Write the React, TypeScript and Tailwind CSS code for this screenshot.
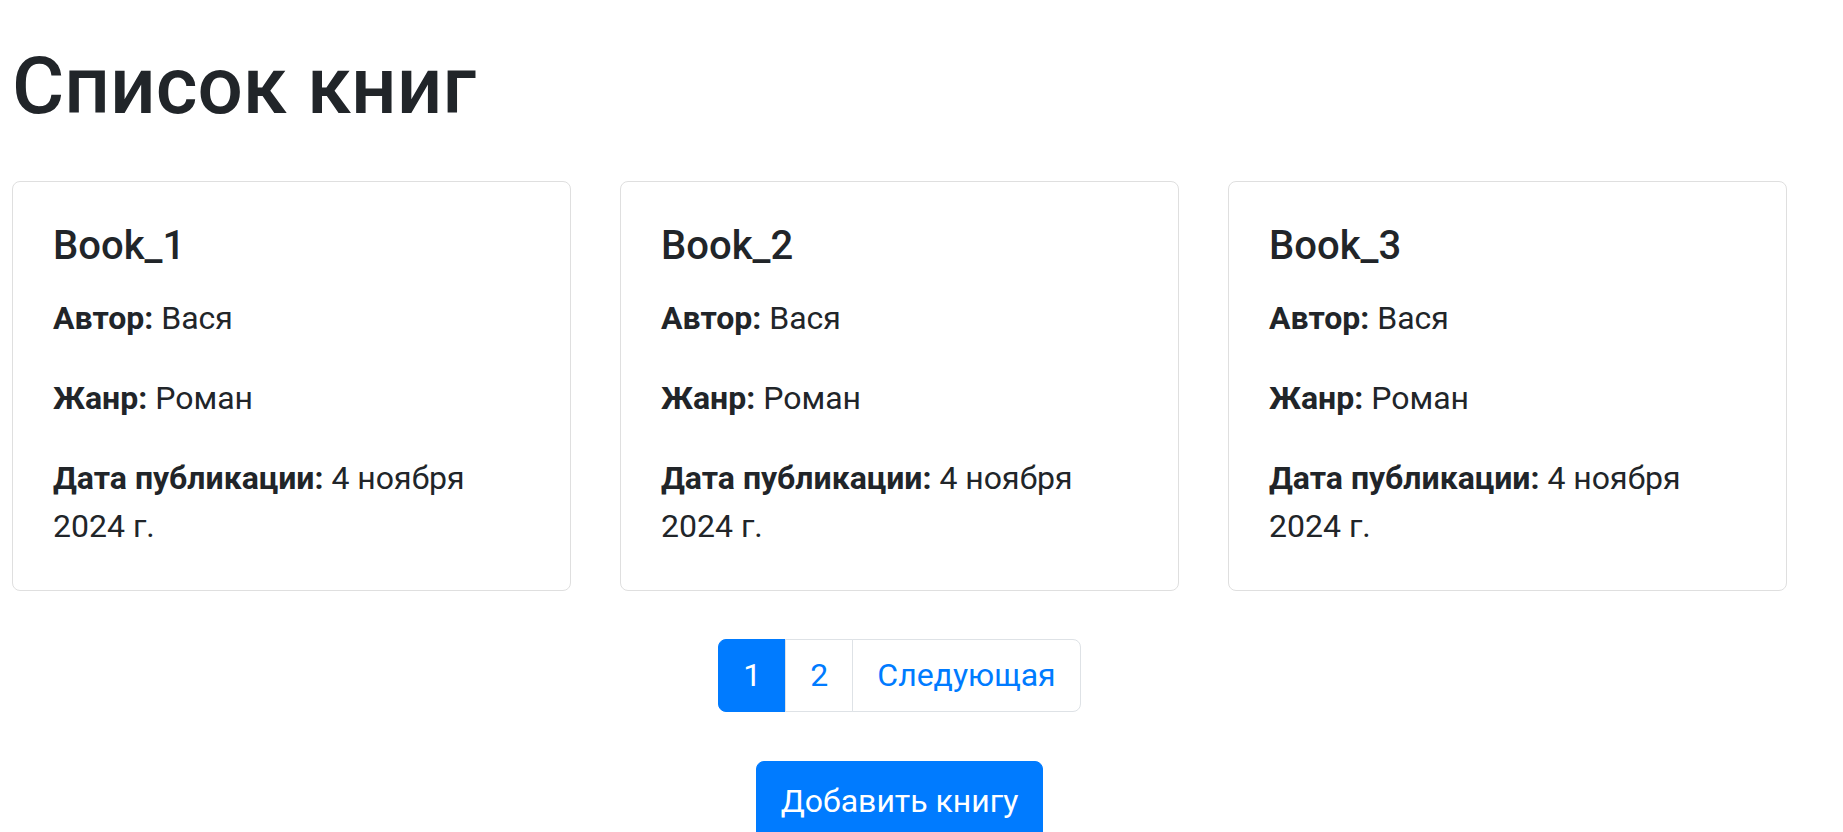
const books = [
  { id: 1, title: "Book_1", author: "Вася", genre: "Роман", date: "4 ноября 2024 г." },
  { id: 2, title: "Book_2", author: "Вася", genre: "Роман", date: "4 ноября 2024 г." },
  { id: 3, title: "Book_3", author: "Вася", genre: "Роман", date: "4 ноября 2024 г." },
];

function BookCard({ book }: { book: (typeof books)[number] }) {
  return (
    <div className="border border-[#dfdfdf] rounded-[8px] bg-white px-[40px] py-[40px]">
      <h5 className="text-[40px] leading-[48px] font-medium mb-[24px]">{book.title}</h5>
      <p className="text-[32px] leading-[48px] mb-[32px]">
        <strong className="font-bold">Автор:</strong> {book.author}
      </p>
      <p className="text-[32px] leading-[48px] mb-[32px]">
        <strong className="font-bold">Жанр:</strong> {book.genre}
      </p>
      <p className="text-[32px] leading-[48px]">
        <strong className="font-bold">Дата публикации:</strong> {book.date}
      </p>
    </div>
  );
}

export default function App() {
  return (
    <div
      className="min-h-screen bg-white text-[#212529] pl-[12px]"
      style={{ fontFamily: "Roboto, 'Noto Sans', sans-serif" }}
    >
      <div className="w-[1775px]">
        {/* Заголовок */}
        <h1 className="text-[80px] leading-[96px] font-medium pt-[38px] mb-[47px]">Список книг</h1>

        {/* Карточки книг */}
        <div className="grid grid-cols-3 gap-[49px]">
          {books.map((b) => (
            <BookCard key={b.id} book={b} />
          ))}
        </div>

        {/* Пагинация */}
        <div className="flex justify-center mt-[48px]">
          <ul className="flex text-[32px] leading-[39px]">
            <li>
              <a className="block px-[24px] py-[16px] bg-[#007bff] border border-[#007bff] text-white rounded-l-[8px]">
                1
              </a>
            </li>
            <li>
              <a className="block -ml-px px-[24px] py-[16px] bg-white border border-[#dee2e6] text-[#007bff]">
                2
              </a>
            </li>
            <li>
              <a className="block -ml-px px-[24px] py-[16px] bg-white border border-[#dee2e6] text-[#007bff] rounded-r-[8px]">
                Следующая
              </a>
            </li>
          </ul>
        </div>

        {/* Кнопка */}
        <div className="flex justify-center mt-[49px]">
          <button className="bg-[#007bff] border border-[#007bff] text-white text-[32px] leading-[48px] px-[24px] py-[15px] rounded-[8px]">
            Добавить книгу
          </button>
        </div>
      </div>
    </div>
  );
}
